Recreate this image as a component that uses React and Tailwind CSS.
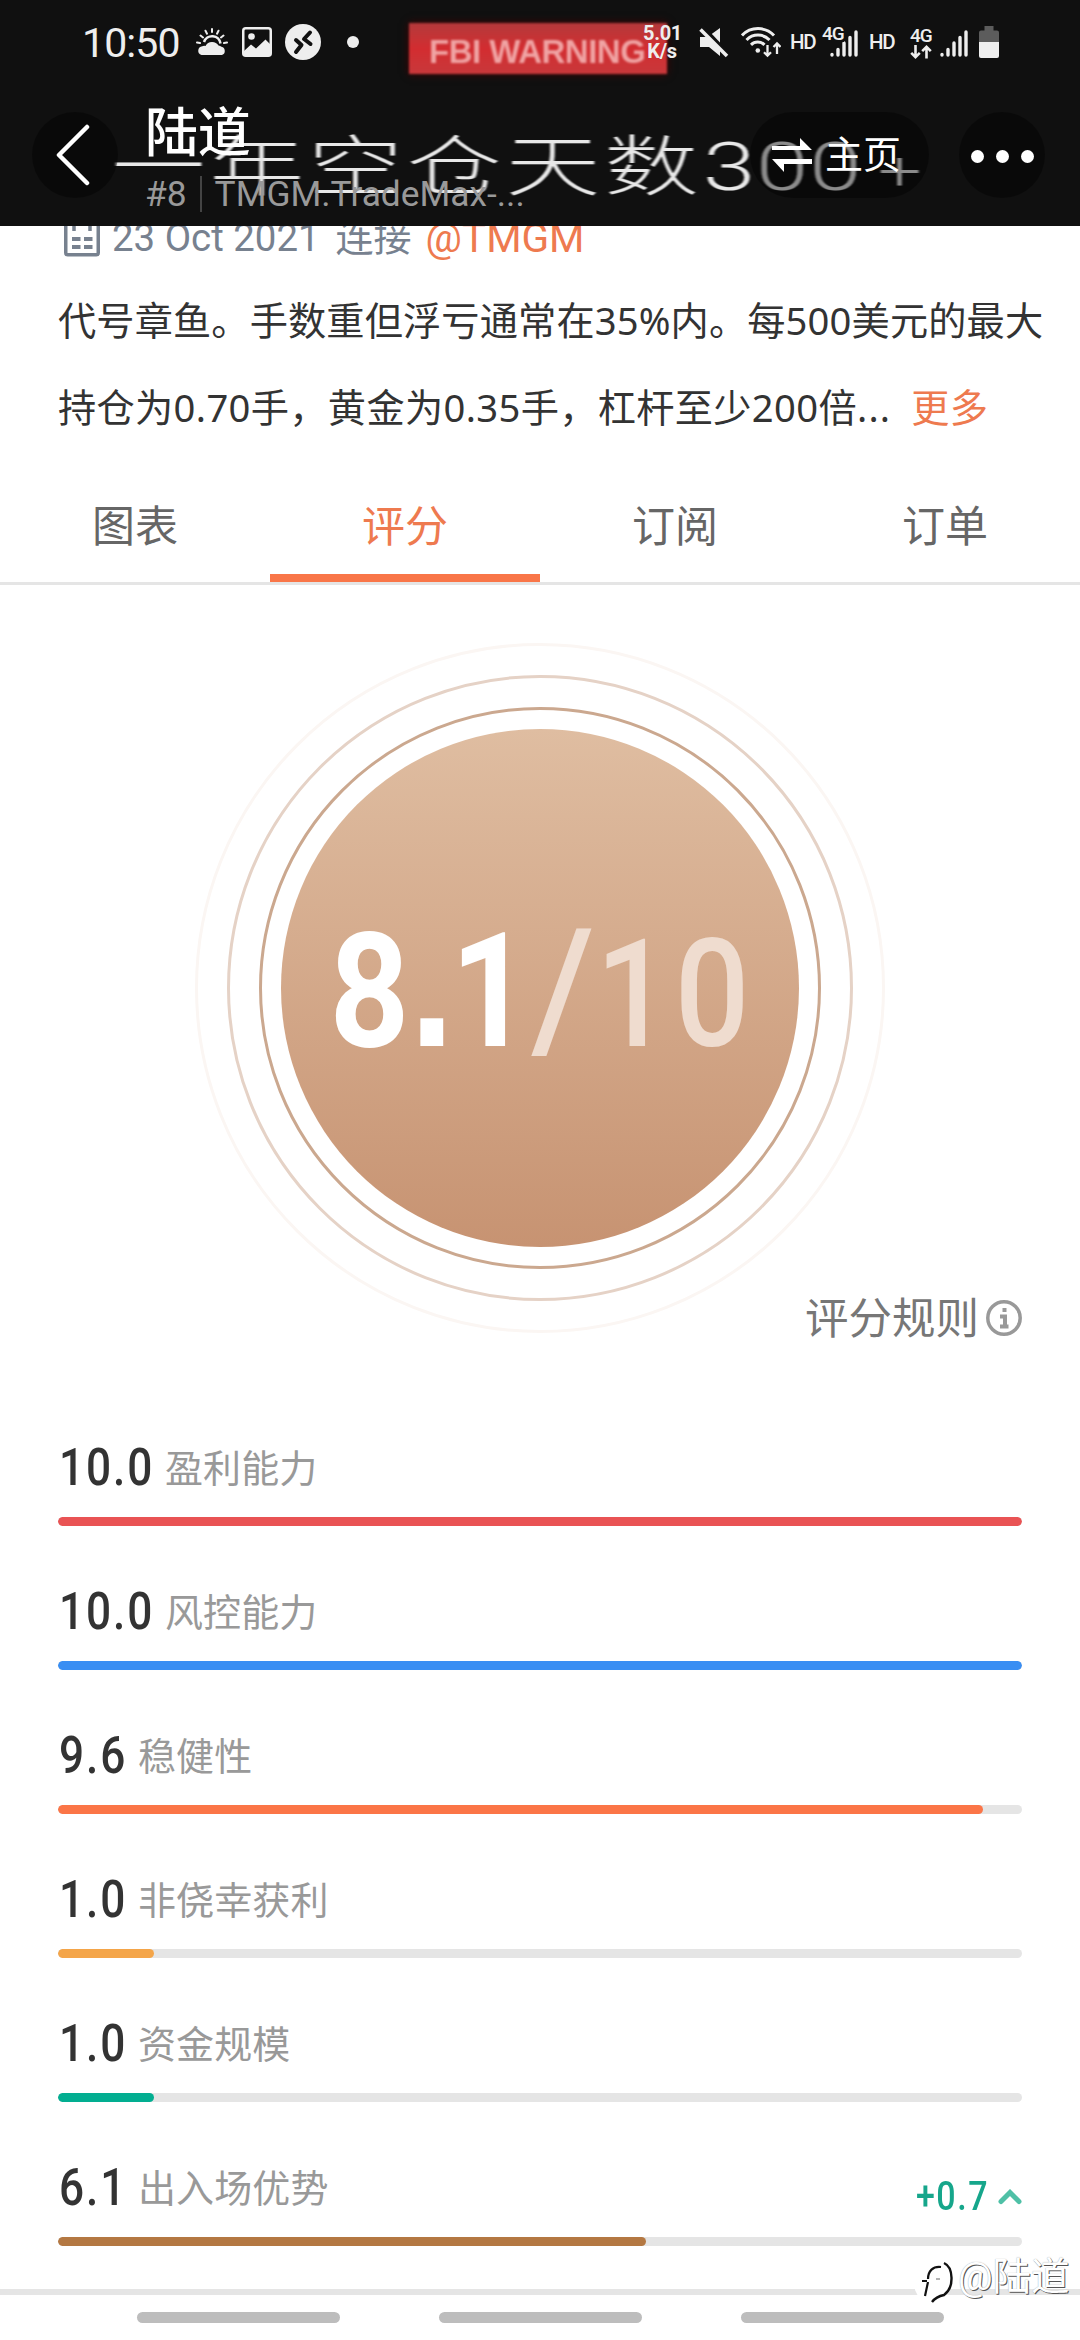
import React, { useState } from "react"
import clsx from "clsx"

const scores = [
  { value: "10.0", name: "盈利能力", color: "bg-[#e95354]" },
  { value: "10.0", name: "风控能力", color: "bg-[#398ef3]" },
  { value: "9.6", name: "稳健性", color: "bg-[#fb7547]" },
  { value: "1.0", name: "非侥幸获利", color: "bg-[#f4a549]" },
  { value: "1.0", name: "资金规模", color: "bg-[#02ae91]" },
  { value: "6.1", name: "出入场优势", color: "bg-[#b47842]", change: "+0.7" },
]

const tabs = ["图表", "评分", "订阅", "订单"]

const SignalBars = () => (
  <svg className="h-[28px] w-[28px]" viewBox="0 0 28 28" stroke="#eee" strokeWidth="3.4" strokeLinecap="round">
    <path d="M2 25.5v.5M8 20.5v5.5M14 14v12M20 8.5v17.5M26 3v23" />
  </svg>
)

const StatusBar = () => (
  <div className="relative flex h-[84px] items-center pl-[82px] text-[#eee]">
    <span className="w-[98px] pt-[2px] text-[41px] leading-none tracking-[-0.9px]">10:50</span>

    <svg className="ml-[16px] h-[28px] w-[32px] shrink-0" viewBox="0 0 32 28" fill="none" stroke="#eee">
      <path
        d="M16 1v3M9.5 2.7l1.5 3M22.5 2.7l-1.5 3M4.5 7.5l2.5 2M27.5 7.5l-2.5 2M1 14.5l3 .5M31 14.5l-3 .5"
        strokeWidth="2"
        strokeLinecap="round"
      />
      <path d="M8 14a8.5 8.5 0 0 1 16.5 1.5" strokeWidth="2.5" />
      <path
        d="M5.5 27a4.5 4.5 0 0 1 .8-8.8 5 5 0 0 1 3.2-.2 7.5 7.5 0 0 1 13-.5 4.8 4.8 0 0 1 3 1.3 4.3 4.3 0 0 1 .5 8.2z"
        fill="#eee"
        stroke="none"
      />
    </svg>

    <svg className="ml-[14px] h-[30px] w-[30px] shrink-0" viewBox="0 0 30 30">
      <rect x="1.25" y="1.25" width="27.5" height="27.5" rx="2.5" fill="none" stroke="#eee" strokeWidth="2.5" />
      <circle cx="9.5" cy="9.5" r="3.3" fill="#eee" />
      <path d="M2 24l7-6.5 5 4 9.5-9 5 5V28H2z" fill="#eee" />
    </svg>

    <svg className="ml-[13px] h-[36px] w-[36px] shrink-0" viewBox="0 0 36 36">
      <circle cx="18" cy="18" r="18" fill="#eee" />
      <path
        d="M11 16l5.5 5-5.5 7M25 8.500l-6 6.500 6.500 5"
        fill="none"
        stroke="#111"
        strokeWidth="4"
        strokeLinejoin="round"
        strokeLinecap="round"
      />
    </svg>

    <span className="ml-[26px] size-3 shrink-0 rounded-full bg-[#eee]"></span>

    <div className="ml-[284px] w-[38px] text-center text-[20px] font-bold leading-[18.5px] tracking-[-0.3px]">
      <p>5.01</p>
      <p>K/s</p>
    </div>

    <svg className="ml-[18px] h-[32px] w-[30px] shrink-0" viewBox="0 0 30 32">
      <path d="M1 11h7.5L21 2v28l-11-9H1z" fill="#eee" />
      <path d="M3 0.5L31 30" stroke="#111" strokeWidth="4" />
      <path d="M1.5 3.5L28 30" stroke="#eee" strokeWidth="3.5" />
    </svg>

    <svg className="ml-[12px] h-[32px] w-[40px] shrink-0" viewBox="0 0 40 32" fill="none" stroke="#eee" strokeWidth="3">
      <path d="M1 9.5a22 22 0 0 1 32 0M5.5 14a16 16 0 0 1 23 0M10 18.8a9.7 9.7 0 0 1 13.5 0" />
      <circle cx="16.8" cy="24.5" r="2.3" fill="#eee" stroke="none" />
      <path d="M26.5 19v11M23 26.2l3.5 3.5 3.5-3.5M36 28V17M32.500 21l3.500-3.500 3.500 3.500" strokeWidth="2.3" />
    </svg>

    <span className="ml-[9px] w-[26px] text-[20.5px] font-medium leading-none tracking-[-1.4px]">HD</span>

    <div className="relative ml-[14px] mt-[2px] h-[28px] shrink-0">
      <SignalBars />
      <span className="absolute -left-[8px] -top-[4px] bg-[#101010] text-[19px] font-medium leading-[17px] tracking-[-1px]">4G</span>
    </div>

    <span className="ml-[11px] w-[26px] text-[20.5px] font-medium leading-none tracking-[-1.4px]">HD</span>

    <div className="ml-[15px] w-[23px] pt-[1px]">
      <p className="text-[19px] font-medium leading-[17px] tracking-[-1px]">4G</p>
      <svg className="mt-px h-[14px] w-[22px]" viewBox="0 0 22 14" fill="none" stroke="#eee" strokeWidth="2.6">
        <path d="M5.500 0v12M1.200 7.800l4.300 4.300 4.300-4.300M16.500 13.500V2M12.200 6.200l4.300-4.300 4.300 4.300" />
      </svg>
    </div>

    <div className="ml-[7px] mt-[2px] shrink-0">
      <SignalBars />
    </div>

    <svg className="ml-[11px] h-[32px] w-[20px] shrink-0" viewBox="0 0 20 32">
      <path d="M5.5 0h9v4.500H18a2 2 0 0 1 2 2V16H0V6.500a2 2 0 0 1 2-2h3.500z" fill="#5c5c5c" />
      <path d="M0 16h20v14a2 2 0 0 1-2 2H2a2 2 0 0 1-2-2z" fill="#eee" />
    </svg>
  </div>
)

const Header = () => (
  <header className="relative z-10 h-[226px] overflow-hidden bg-[#101010]">
    {/* cover photo behind the bar */}
    <div className="absolute left-[409px] top-[23px] flex h-[51px] w-[258px] items-center bg-linear-to-b from-[#b3393b] via-[#d32c30] to-[#c8383b] pl-[20px] shadow-[0_0_8px_#400] blur-[0.8px]">
      <span className="pt-[6px] font-['Liberation_Sans',sans-serif] text-[33px] font-bold leading-none tracking-[-0.5px] text-[#f0a3a3]">
        FBI&nbsp;WARNING
      </span>
    </div>
    <p className="absolute left-[111px] top-[125px] origin-left scale-x-[1.43] whitespace-nowrap text-[66px] font-light leading-[86px] tracking-[3px] text-[#e8e8e8] blur-[0.6px]">
      一年空仓天数<span className="tracking-[0.5px]">300</span>
      <span className="ml-[11px] text-[54px]">+</span>
    </p>

    <StatusBar />

    <div className="relative flex h-[142px] pl-[32px]">
      <div className="mt-[28px] flex size-[86px] items-center justify-center rounded-full bg-black/40">
        <svg className="-ml-[5px] h-[62px] w-[36px]" viewBox="0 0 36 62" fill="none" stroke="#fff" strokeWidth="4.5" strokeLinecap="round" strokeLinejoin="round">
          <path d="M32 3L4 31l28 28" />
        </svg>
      </div>
      <div className="ml-[27px] mt-[15px] w-[400px]">
        <p className="text-[53px] font-medium leading-[70px] tracking-[-0.3px] text-white">陆道</p>
        <p className="mt-[4px] flex items-center text-[35.3px] leading-[42px] text-[#999]">
          #8
          <span className="ml-[13px] mr-[13px] h-[36px] w-[2px] bg-[#444]"></span>
          <span>TMGM.TradeMax-...</span>
        </p>
      </div>
      <div className="ml-[205px] mt-[28px] flex h-[86px] w-[179px] items-center rounded-full bg-black/40 pl-[22px] text-white">
        <svg className="h-[34px] w-[40px]" viewBox="0 0 40 34" fill="#fff">
          <path d="M0 8h28V0l12 12H0zM40 26H12v8L0 21h40z" />
        </svg>
        <span className="ml-[13px] text-[38px] leading-[44px]">主页</span>
      </div>
      <div className="ml-[30px] mt-[28px] flex size-[86px] items-center justify-center gap-[12px] rounded-full bg-black/40 pt-[3px]">
        <span className="size-[13px] rounded-full bg-white"></span>
        <span className="size-[13px] rounded-full bg-white"></span>
        <span className="size-[13px] rounded-full bg-white"></span>
      </div>
    </div>
  </header>
)

const Intro = () => (
  <div className="pl-[58px]">
    <div className="-mt-[14px] flex h-[52px] items-center text-[38.4px] leading-none text-[#77818f]">
      <svg className="ml-[6px] h-[40px] w-[36px]" viewBox="0 0 36 40" fill="none" stroke="#77818f">
        <rect x="1.75" y="3.75" width="32.5" height="33" rx="2" strokeWidth="3.5" />
        <path d="M8 21h8.5M20 21h8.5M8 29h8.5M20 29h8.5" strokeWidth="4" />
        <path d="M10 4v9M26 4v9" strokeWidth="3.5" />
      </svg>
      <span className="ml-[12px]">23 Oct 2021</span>
      <span className="ml-[16px] text-[38px]">连接</span>
      <span className="ml-[14px] text-[40.5px] text-[#ee7a4f]">@TMGM</span>
    </div>
    <p className="mt-[13px] w-[1010px] whitespace-nowrap font-['Noto_Sans','Noto_Sans_CJK_SC',sans-serif] text-[38.2px] leading-[87px] tracking-[0.15px] text-[#333]">
      代号章鱼。手数重但浮亏通常在35%内。每500美元的最大
      <br />
      <span className="tracking-[0.35px]">持仓为0.70手，黄金为0.35手，杠杆至少200倍</span>
      <span className="tracking-[1.2px]">...</span>
      <span className="ml-[20px] text-[#ee7a4f]">更多</span>
    </p>
  </div>
)

const Gauge = () => (
  <svg className="mx-auto mt-[55px] block h-[696px] w-[696px]" viewBox="-348 -348 696 696">
    <defs>
      <linearGradient id="bronze" x1="0" y1="0" x2="0" y2="1">
        <stop offset="0" stopColor="#dfbda1" />
        <stop offset="1" stopColor="#c79372" />
      </linearGradient>
    </defs>
    <g fill="none" strokeWidth="3">
      <circle r="343.5" stroke="#fbf6f3" />
      <circle r="311.5" stroke="#e5d2c6" />
      <circle r="279.5" stroke="#cba88f" />
    </g>
    <circle r="259" fill="url(#bronze)" />
    <g className="font-['Roboto',sans-serif]">
      <text transform="scale(.87 1)" x="-242 -150 -103" y="58" fontSize="160" fontWeight="700" fill="#fff">
        8
        <tspan fontFamily="Liberation Sans" fontSize="185">
          .
        </tspan>
        1
      </text>
      <text transform="scale(.98 1)" x="-9" y="58" fontSize="166" fontWeight="500" fill="#efdccf">
        /
      </text>
      <text transform="scale(.87 1)" x="64 155" y="58" fontSize="151" fontWeight="500" fill="#efdccf">
        10
      </text>
    </g>
  </svg>
)

const ScoreRow = ({ value, name, color, change }) => (
  <div className="pt-[37px]">
    <div className="flex h-[98px] items-center pl-[1px]">
      <div className={clsx("shrink-0", value.length == 4 ? "w-[106px]" : "w-[79px]")}>
        <span className="inline-block origin-left scale-x-[0.85] text-[52px] font-medium leading-[60px] tracking-[2.2px] text-[#333]">
          {value}
        </span>
      </div>
      <span className="pt-[1px] text-[38px] leading-[50px] tracking-[0.1px] text-[#999]">{name}</span>
      {change && (
        <div className="ml-auto flex items-center pt-[18px]">
          <span className="origin-right scale-x-[0.85] text-[40px] font-medium leading-none tracking-[1.8px] text-[#16a68b]">
            {change}
          </span>
          <svg className="ml-[9px] h-[16px] w-[24px]" viewBox="0 0 24 16" fill="none" stroke="#4fc0a6" strokeWidth="5" strokeLinecap="round">
            <path d="M3 12.5l9-9 9 9" />
          </svg>
        </div>
      )}
    </div>
    <div className="h-[9px] overflow-hidden rounded-full bg-[#e5e5e5]">
      <div className={clsx("h-full rounded-full", color)} style={{ width: `${value * 10}%` }}></div>
    </div>
  </div>
)

const Watermark = () => (
  <div className="absolute left-[914px] top-[2252px] flex h-[50px] items-center text-white">
    <svg className="mt-[10px] h-[44px] w-[40px]" viewBox="0 0 40 44" fill="none">
      <path d="M1 30C0 12 14 1 28 3c12 4 13 27 2 35l-10 3L4 36z" fill="#fff" />
      <path d="M30 3c9 4 11 24 0 32-5 1-9 3-12 7" stroke="#111" strokeWidth="2.4" />
      <path d="M27 7c-8-1-13 4-13 12M8 21h5M14 22l-3 14" stroke="#111" strokeWidth="2.2" />
      <path d="M22 19h4" stroke="#999" strokeWidth="1.5" />
    </svg>
    <span className="ml-[4px] whitespace-nowrap text-[38.5px] leading-none [text-shadow:1px_1px_0_#555,0_0_1px_#999]">@陆道</span>
  </div>
)

export default function App() {
  const [activeTab, setActiveTab] = useState("评分")

  return (
    <div className="relative h-[2340px] w-[1080px] overflow-hidden bg-white font-['Roboto','Noto_Sans_CJK_SC',sans-serif]">
      <Header />
      <Intro />

      <div className="mt-[19px] grid grid-cols-4 border-b-[3px] border-[#e5e5e5]">
        {tabs.map((tab) => (
          <div
            key={tab}
            className={clsx(
              "flex h-[112px] items-center justify-center border-b-8 pt-[10px] text-[43px] leading-none",
              tab == activeTab ? "border-[#f97648] text-[#ee7a4f]" : "border-transparent text-[#666]"
            )}
            onClick={() => setActiveTab(tab)}
          >
            {tab}
          </div>
        ))}
      </div>

      <Gauge />

      <div className="-mt-[39px] flex h-[44px] items-center justify-end pr-[58px]">
        <span className="pt-[2px] text-[43.5px] leading-none text-[#777]">评分规则</span>
        <svg className="-mt-[2px] ml-[7px] h-[36px] w-[36px]" viewBox="0 0 36 36" fill="none" stroke="#999">
          <circle cx="18" cy="18" r="16.2" strokeWidth="3.5" />
          <path d="M18.5 8v4M14 16.5h5V27M14 26.5h8.5" strokeWidth="4" />
        </svg>
      </div>

      <div className="mt-[41px] px-[58px]">
        {scores.map((score) => (
          <ScoreRow key={score.name} {...score} />
        ))}
      </div>

      <div className="mt-[43px] h-[6px] bg-[#e5e5e5]"></div>
      <div className="mt-[17px] flex justify-center gap-[99px]">
        <span className="h-[11px] w-[203px] rounded-full bg-[#bdbdbd]"></span>
        <span className="h-[11px] w-[203px] rounded-full bg-[#bdbdbd]"></span>
        <span className="h-[11px] w-[203px] rounded-full bg-[#bdbdbd]"></span>
      </div>

      <Watermark />
    </div>
  )
}
